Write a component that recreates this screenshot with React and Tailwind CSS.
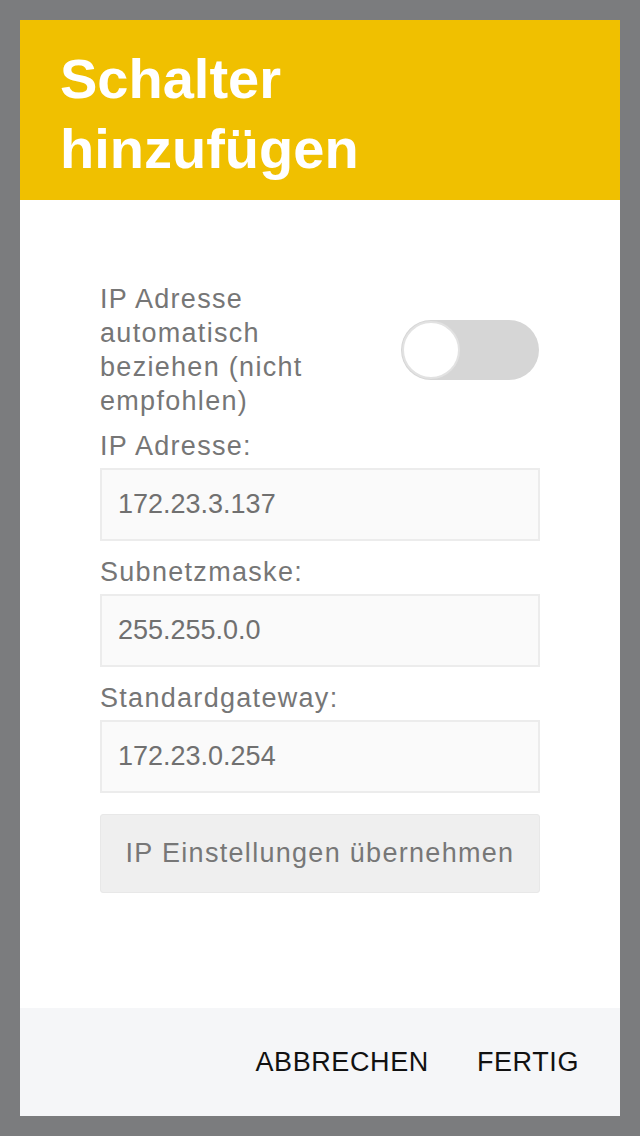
import React from "react";

const font = { fontFamily: '"Liberation Sans", Arial, sans-serif' };

function Field({ label, value }) {
  return (
    <div className="flex flex-col">
      <div className="h-[34px] text-[27px] leading-[34px] tracking-[1.3px] text-[#767676] mb-[5px]">{label}</div>
      <div className="h-[73px] border-2 border-[#ececec] bg-[#fafafa] flex items-center pl-[16px] text-[27px] tracking-[0px] text-[#707070]">
        {value}
      </div>
    </div>
  );
}

export default function App() {
  return (
    <div className="w-[640px] h-[1136px] bg-[#7b7c7e] p-[20px]" style={font}>
      <div className="w-[600px] h-[1096px] flex flex-col bg-white">
        <div className="h-[180px] bg-[#f0c000] pl-[40px] pt-[24px]">
          <h1 className="text-[56px] leading-[70px] font-bold text-white">
            Schalter
            <br />
            hinzufügen
          </h1>
        </div>
        <div className="flex-1 px-[80px] pt-[82px] flex flex-col">
          <div className="flex items-center justify-between">
            <div className="w-[250px] text-[27px] leading-[34px] tracking-[1.3px] text-[#767676]">
              IP Adresse automatisch beziehen (nicht empfohlen)
            </div>
            <div className="w-[138px] h-[60px] rounded-full bg-[#d6d6d6] p-[1px] flex items-center mr-[1px]">
              <div className="w-[58px] h-[58px] rounded-full bg-white border-2 border-[#e2e2e2]" />
            </div>
          </div>
          <div className="flex flex-col gap-[14px] mt-[11px]">
            <Field label="IP Adresse:" value="172.23.3.137" />
            <Field label="Subnetzmaske:" value="255.255.0.0" />
            <Field label="Standardgateway:" value="172.23.0.254" />
          </div>
          <button className="mt-[21px] h-[79px] w-full rounded-[3px] bg-[#efefef] border border-[#e8e8e8] text-[27px] tracking-[1.3px] text-[#777777]">
            IP Einstellungen übernehmen
          </button>
        </div>
        <div className="h-[108px] bg-[#f5f6f8] flex items-center justify-end pr-[41px] gap-[48px] text-[27px] tracking-[0.6px] text-[#111111]">
          <span>ABBRECHEN</span>
          <span>FERTIG</span>
        </div>
      </div>
    </div>
  );
}
